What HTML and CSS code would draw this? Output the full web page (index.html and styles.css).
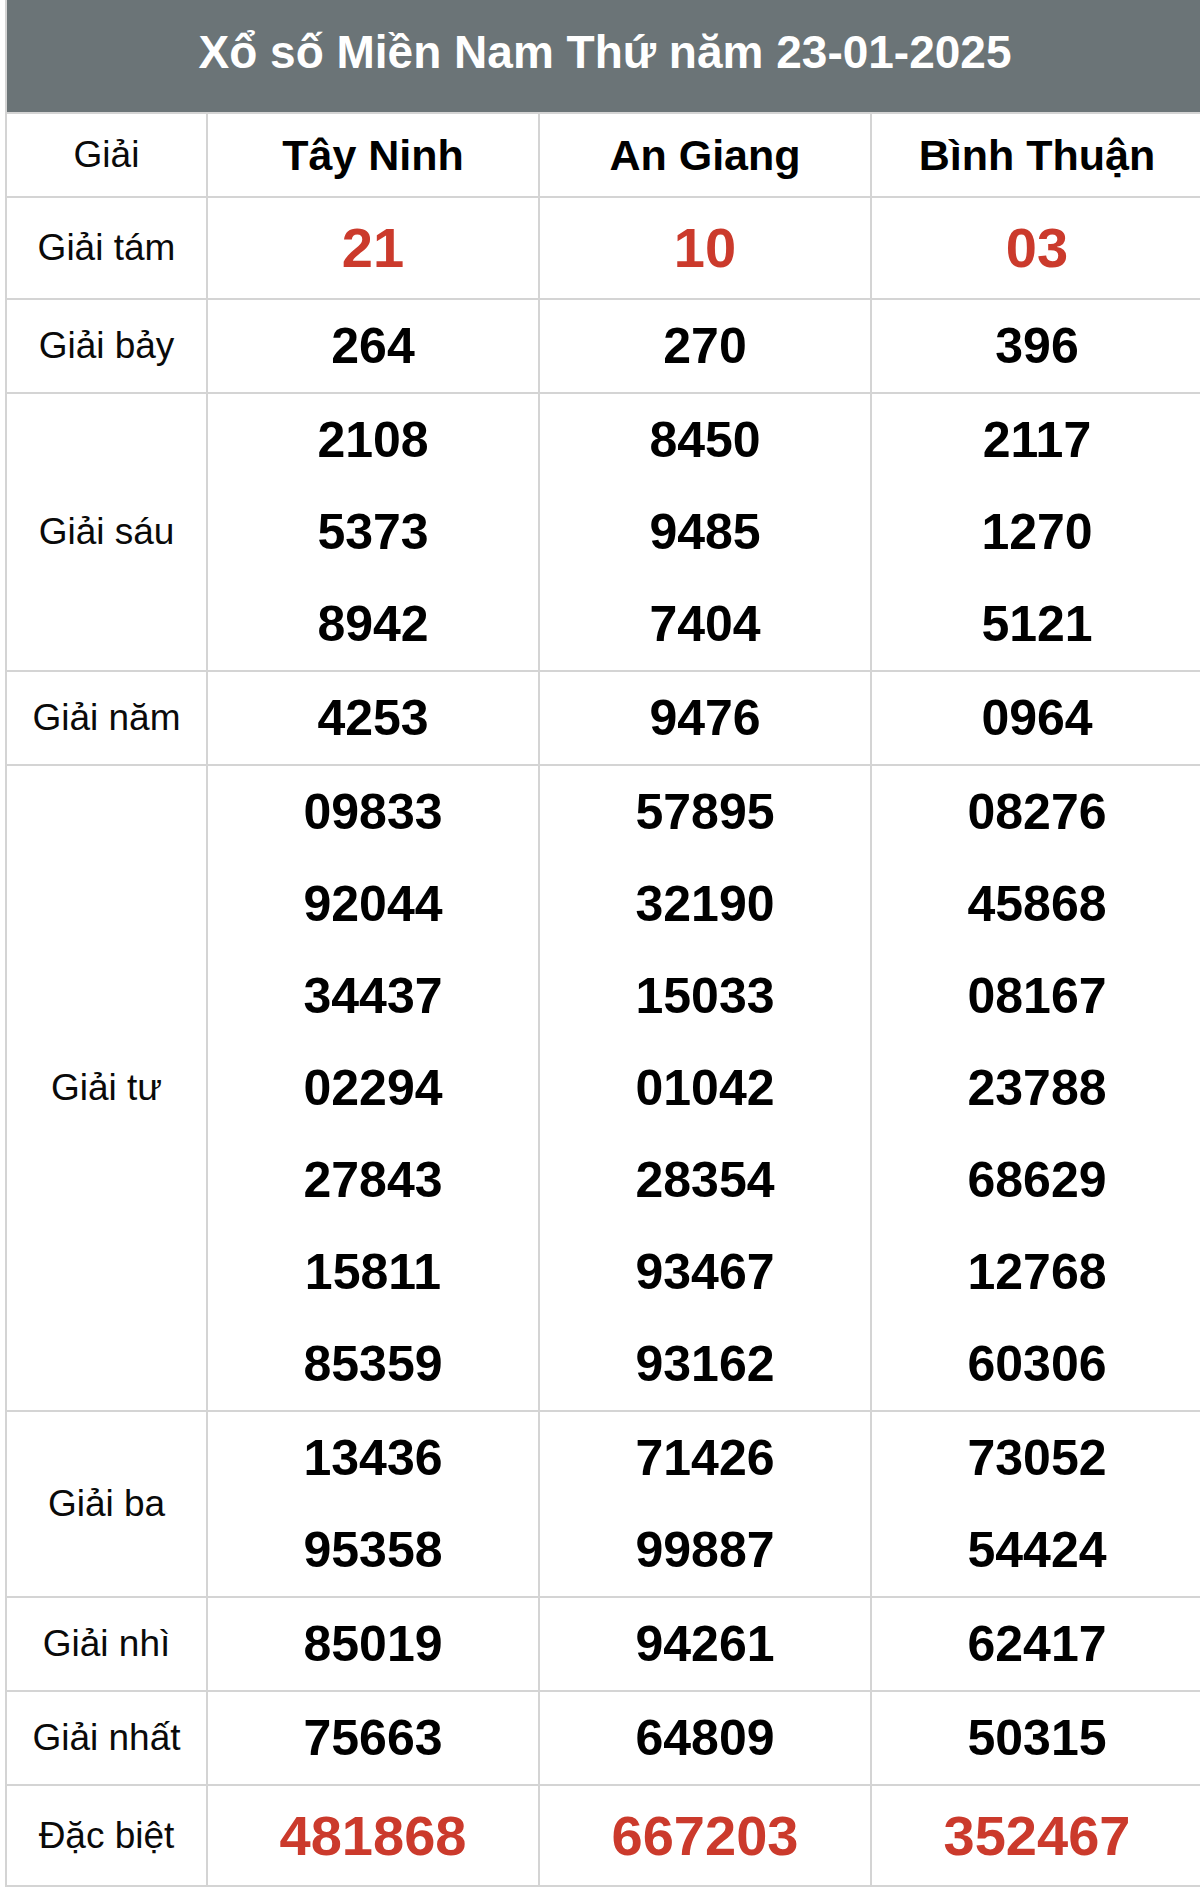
FILE: index.html
```html
<!DOCTYPE html>
<html lang="vi">
<head>
<meta charset="utf-8">
<title>Xổ số Miền Nam Thứ năm 23-01-2025</title>
<link rel="stylesheet" href="styles.css">
</head>
<body>
<div class="wrap">
<table class="kq">
  <colgroup>
    <col class="c-label">
    <col class="c-prov">
    <col class="c-prov">
    <col class="c-prov">
  </colgroup>
  <thead>
    <tr class="title-row"><th colspan="4" class="title">Xổ số Miền Nam Thứ năm 23-01-2025</th></tr>
    <tr class="head-row">
      <td class="label">Giải</td>
      <th class="prov">Tây Ninh</th>
      <th class="prov">An Giang</th>
      <th class="prov">Bình Thuận</th>
    </tr>
  </thead>
  <tbody>
    <tr class="big">
      <td class="label">Giải tám</td>
      <td class="num red">21</td>
      <td class="num red">10</td>
      <td class="num red">03</td>
    </tr>
    <tr>
      <td class="label">Giải bảy</td>
      <td class="num"><div>264</div></td>
      <td class="num"><div>270</div></td>
      <td class="num"><div>396</div></td>
    </tr>
    <tr>
      <td class="label">Giải sáu</td>
      <td class="num"><div>2108</div><div>5373</div><div>8942</div></td>
      <td class="num"><div>8450</div><div>9485</div><div>7404</div></td>
      <td class="num"><div>2117</div><div>1270</div><div>5121</div></td>
    </tr>
    <tr>
      <td class="label">Giải năm</td>
      <td class="num"><div>4253</div></td>
      <td class="num"><div>9476</div></td>
      <td class="num"><div>0964</div></td>
    </tr>
    <tr>
      <td class="label">Giải tư</td>
      <td class="num"><div>09833</div><div>92044</div><div>34437</div><div>02294</div><div>27843</div><div>15811</div><div>85359</div></td>
      <td class="num"><div>57895</div><div>32190</div><div>15033</div><div>01042</div><div>28354</div><div>93467</div><div>93162</div></td>
      <td class="num"><div>08276</div><div>45868</div><div>08167</div><div>23788</div><div>68629</div><div>12768</div><div>60306</div></td>
    </tr>
    <tr>
      <td class="label">Giải ba</td>
      <td class="num"><div>13436</div><div>95358</div></td>
      <td class="num"><div>71426</div><div>99887</div></td>
      <td class="num"><div>73052</div><div>54424</div></td>
    </tr>
    <tr>
      <td class="label">Giải nhì</td>
      <td class="num"><div>85019</div></td>
      <td class="num"><div>94261</div></td>
      <td class="num"><div>62417</div></td>
    </tr>
    <tr>
      <td class="label">Giải nhất</td>
      <td class="num"><div>75663</div></td>
      <td class="num"><div>64809</div></td>
      <td class="num"><div>50315</div></td>
    </tr>
    <tr class="big last">
      <td class="label">Đặc biệt</td>
      <td class="num red">481868</td>
      <td class="num red">667203</td>
      <td class="num red">352467</td>
    </tr>
  </tbody>
</table>
</div>
</body>
</html>
```

FILE: styles.css
```css
html, body {
  margin: 0;
  padding: 0;
  background: #ffffff;
  overflow: hidden;
}

body {
  font-family: "Liberation Sans", Arial, "Noto Sans", sans-serif;
  color: #000;
}

.wrap {
  padding-left: 5px;
  width: 1210px;
}

.kq {
  width: 1198px;
  border-collapse: collapse;
  table-layout: fixed;
}

.c-label { width: 201px; }
.c-prov { width: 332px; }

.kq td,
.kq th {
  border: 2px solid #d4d4d4;
  padding: 0;
  text-align: center;
  vertical-align: middle;
}

.title-row .title {
  background: #6b7477;
  color: #ffffff;
  font-size: 46px;
  font-weight: bold;
  height: 104px;
  line-height: 104px;
  padding-bottom: 8px;
  border-top: 0;
  border-right: 0;
}

.head-row td,
.head-row th {
  height: 82px;
  line-height: 82px;
}

.label {
  font-size: 37px;
  font-weight: normal;
  color: #0a0a0a;
}

.prov {
  font-size: 43px;
  font-weight: bold;
  color: #000;
}

.num {
  font-size: 50px;
  font-weight: bold;
  color: #000;
}

.num div {
  line-height: 92px;
  height: 92px;
}

.big .num {
  height: 100px;
  line-height: 100px;
}

.last .num {
  height: 99px;
  line-height: 99px;
}

.red {
  color: #cb3a2c;
  font-size: 56px;
}
```
